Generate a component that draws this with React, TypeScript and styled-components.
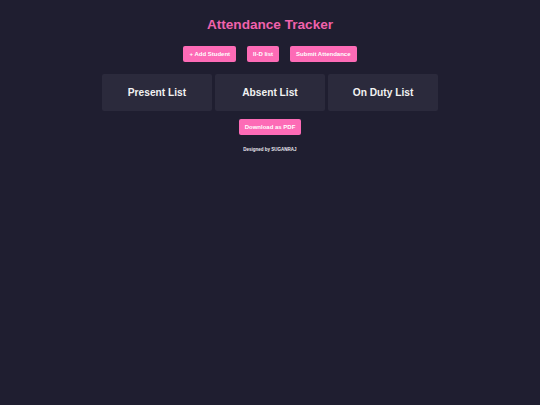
import React from "react";
import styled, { createGlobalStyle } from "styled-components";

const Global = createGlobalStyle`
  html, body { margin: 0; padding: 0; background: #1f1e30; }
  body { font-family: "Liberation Sans", Arial, sans-serif; color: #fff; min-height: 405px; }
`;

const Page = styled.div`
  display: flex;
  flex-direction: column;
  align-items: center;
  padding-top: 16px;
`;

const Title = styled.h1`
  margin: 0;
  font-size: 13.6px;
  line-height: 18px;
  font-weight: 700;
  color: #f062ac;
`;

const Toolbar = styled.div`
  display: flex;
  gap: 11px;
  margin-top: 12px;
`;

const PinkButton = styled.button`
  background: #fd6bb6;
  color: #fff;
  border: none;
  border-radius: 2px;
  height: 16px;
  padding: 0 6px;
  font-family: "Liberation Sans", Arial, sans-serif;
  font-size: 6px;
  font-weight: 700;
  cursor: pointer;
`;

const Lists = styled.div`
  display: grid;
  grid-template-columns: repeat(3, 110px);
  gap: 3px;
  margin-top: 12px;
`;

const ListCard = styled.div`
  background: #2b2a3c;
  border-radius: 2px;
  height: 37px;
  display: flex;
  align-items: center;
  justify-content: center;
  font-size: 10.2px;
  font-weight: 700;
  color: #f2f2f2;
`;

const DownloadRow = styled.div`
  margin-top: 4px;
`;

const Footer = styled.p`
  margin: 12px 0 0;
  font-size: 4.5px;
  font-weight: 700;
  color: #e8e8ee;
`;

export default function App() {
  return (
    <>
      <Global />
      <Page>
        <Title>Attendance Tracker</Title>
        <Toolbar>
          <PinkButton>+ Add Student</PinkButton>
          <PinkButton>II-D list</PinkButton>
          <PinkButton>Submit Attendance</PinkButton>
        </Toolbar>
        <Lists>
          <ListCard>Present List</ListCard>
          <ListCard>Absent List</ListCard>
          <ListCard>On Duty List</ListCard>
        </Lists>
        <DownloadRow>
          <PinkButton>Download as PDF</PinkButton>
        </DownloadRow>
        <Footer>Designed by SUGANRAJ</Footer>
      </Page>
    </>
  );
}
